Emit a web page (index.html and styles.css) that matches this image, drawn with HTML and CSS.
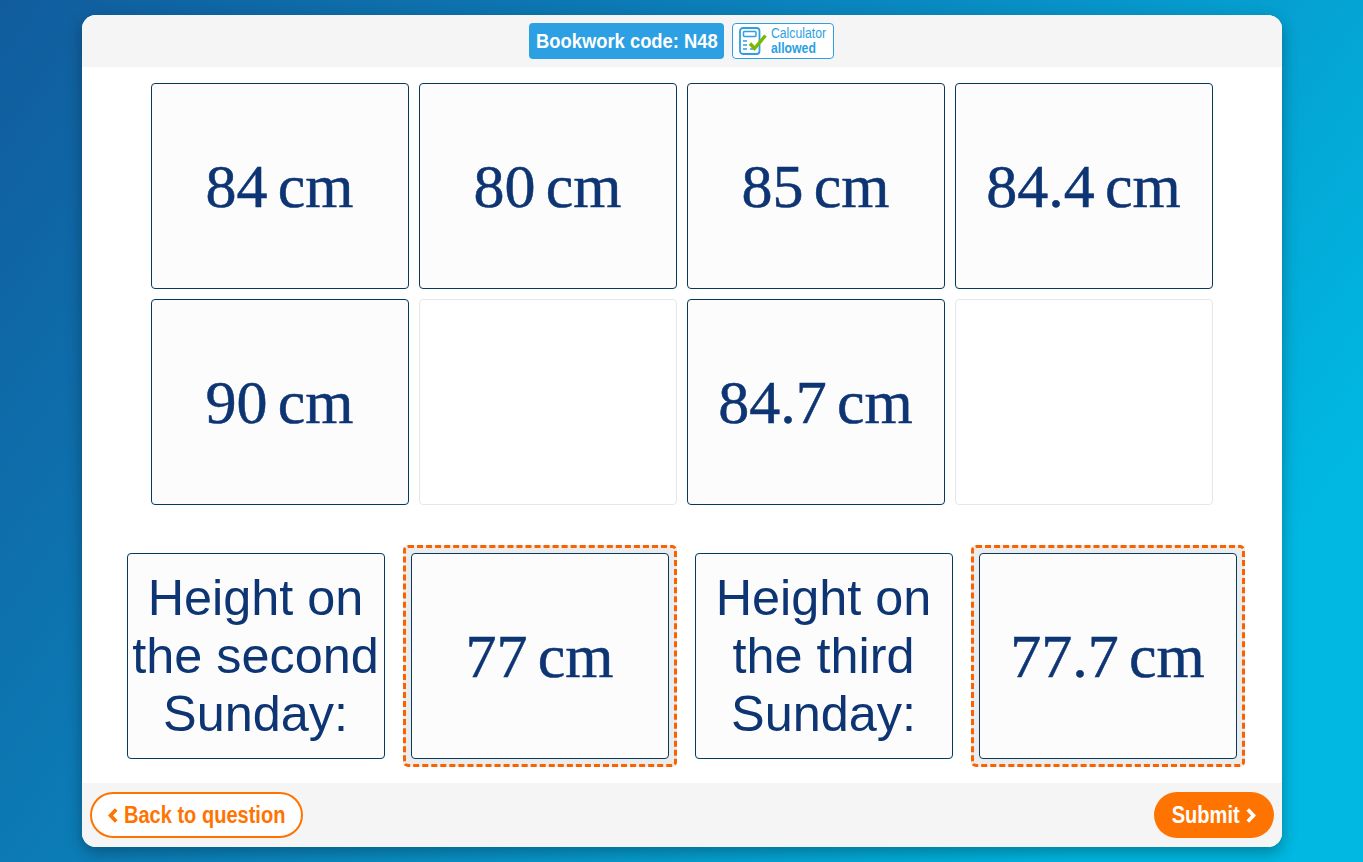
FILE: index.html
```html
<!doctype html>
<html lang="en">
<head>
  <meta charset="utf-8">
  <title>Bookwork code: N48</title>
  <link rel="stylesheet" href="styles.css">
</head>
<body>
  <main class="panel">
    <header class="panel-head">
      <span class="bookwork"><span class="narrow">Bookwork code: N48</span></span>
      <span class="calc">
        <svg class="calc-icon" width="28" height="28" viewBox="0 0 28 28" fill="none">
          <rect x="1" y="1" width="19.5" height="26" rx="3" stroke="#2d9fe3" stroke-width="1.8"/>
          <rect x="4.5" y="4.5" width="12.5" height="5" rx="1" stroke="#2d9fe3" stroke-width="1.5"/>
          <path d="M4 14h4M4 18h4M4 22h4M11 18h2M11 22h5" stroke="#2d9fe3" stroke-width="1.5"/>
          <path d="M11 16.5l4.5 5L26.5 8.5" stroke="#7ab800" stroke-width="3.4"/>
        </svg>
        <span class="calc-text narrow">Calculator<br><b>allowed</b></span>
      </span>
    </header>

    <section class="options">
      <div class="tile math">84&#8202;&#8202;cm</div>
      <div class="tile math">80&#8202;&#8202;cm</div>
      <div class="tile math">85&#8202;&#8202;cm</div>
      <div class="tile math">84.4&#8202;&#8202;cm</div>
      <div class="tile math">90&#8202;&#8202;cm</div>
      <div class="tile empty"></div>
      <div class="tile math">84.7&#8202;&#8202;cm</div>
      <div class="tile empty"></div>
    </section>

    <section class="answers">
      <div class="slot"><div class="tile label">Height on the second Sunday:</div></div>
      <div class="slot filled"><div class="tile math">77&#8202;&#8202;cm</div></div>
      <div class="slot"><div class="tile label">Height on the third Sunday:</div></div>
      <div class="slot filled"><div class="tile math">77.7&#8202;&#8202;cm</div></div>
    </section>

    <footer class="panel-foot">
      <button class="btn btn-back">
        <svg width="10" height="15" viewBox="0 0 10 15" fill="none"><path d="M8.2 1.5L2.5 7.5l5.7 6" stroke="#ff7300" stroke-width="3.6"/></svg>
        <span class="narrow">Back to question</span>
      </button>
      <button class="btn btn-submit">
        <span class="narrow">Submit</span>
        <svg width="10" height="15" viewBox="0 0 10 15" fill="none"><path d="M1.8 1.5l5.7 6-5.7 6" stroke="#fff" stroke-width="3.6"/></svg>
      </button>
    </footer>
  </main>
</body>
</html>
```

FILE: styles.css
```css
:root {
  --navy: #0e3573;
  --edge: #053a5b;
  --sky: #2d9fe3;
  --orange: #ff7300;
  --bar: #f5f5f5;
}
html, body { height: 100%; }
body {
  margin: 0;
  height: 862px;
  box-sizing: border-box;
  padding-top: 15px;
  overflow: hidden;
  background: linear-gradient(125deg, #115c9d 0%, #0a87bf 45%, #00b8e2 85%);
  font-family: "Liberation Sans", Arial, sans-serif;
}
.panel {
  width: 1200px;
  height: 832px;
  margin: 0 auto;
  background: #fff;
  border-radius: 14px;
  overflow: hidden;
  box-shadow: 0 6px 16px rgba(0, 0, 0, 0.3);
  display: flex;
  flex-direction: column;
}
/* no condensed face installed, so squeeze the regular one */
.narrow {
  display: inline-block;
  flex: none;
  white-space: nowrap;
  transform: scaleX(0.875);
}
.panel-head {
  height: 52px;
  flex: none;
  background: var(--bar);
  display: flex;
  align-items: center;
  justify-content: center;
  gap: 8px;
}
.bookwork {
  box-sizing: border-box;
  width: 195px;
  height: 36px;
  display: flex;
  align-items: center;
  justify-content: center;
  background: var(--sky);
  color: #fff;
  font-weight: 700;
  font-size: 21px;
  border-radius: 4px;
}
.calc {
  display: flex;
  align-items: center;
  height: 36px;
  width: 102px;
  box-sizing: border-box;
  background: #fff;
  border: 1px solid var(--sky);
  border-radius: 4px;
  padding-left: 6px;
  color: var(--sky);
}
.calc-icon { flex: none; }
.calc-text {
  font-size: 14px;
  line-height: 15px;
  margin: 0 -4px 0 0;
}

.options {
  display: grid;
  grid-template-columns: repeat(4, 258px);
  grid-auto-rows: 206px;
  gap: 10px;
  justify-content: center;
  margin-top: 16px;
}
.tile {
  box-sizing: border-box;
  width: 258px;
  height: 206px;
  background: #fcfcfc;
  border: 1px solid var(--edge);
  border-radius: 4px;
  color: var(--navy);
  display: flex;
  align-items: center;
  justify-content: center;
  text-align: center;
}
.tile.empty { background: #fff; border-color: #e6e6e6; }
.math {
  font-family: "Liberation Serif", "Times New Roman", serif;
  font-size: 62px;
  -webkit-text-stroke: 0.5px var(--navy);
}
.label {
  font-size: 50.4px;
  line-height: 58px;
}
.answers {
  display: grid;
  grid-template-columns: repeat(4, 274px);
  gap: 10px;
  justify-content: center;
  margin-top: 40px;
}
.slot {
  box-sizing: border-box;
  padding: 5px;
  border: 3px solid transparent;
  border-radius: 5px;
}
.slot.filled {
  background: #ececec;
  border: 3px dashed #f96200;
}
.panel-foot {
  margin-top: auto;
  height: 64px;
  flex: none;
  background: var(--bar);
  display: flex;
  align-items: center;
  justify-content: space-between;
  padding: 0 8px;
}
.btn {
  height: 46px;
  border-radius: 23px;
  box-sizing: border-box;
  padding: 0;
  font-family: inherit;
  font-weight: 700;
  font-size: 24px;
  display: flex;
  align-items: center;
  justify-content: center;
  gap: 6px;
  cursor: pointer;
}
.btn .narrow { transform: scaleX(0.835); }
.btn-back {
  width: 213px;
  padding-left: 1px;
  background: #fff;
  border: 2px solid var(--orange);
  color: var(--orange);
}
.btn-back .narrow { margin: 0 -16px; }
.btn-submit {
  width: 120px;
  background: var(--orange);
  border: none;
  color: #fff;
}
.btn-submit .narrow { margin: 0 -6.5px; }
```
